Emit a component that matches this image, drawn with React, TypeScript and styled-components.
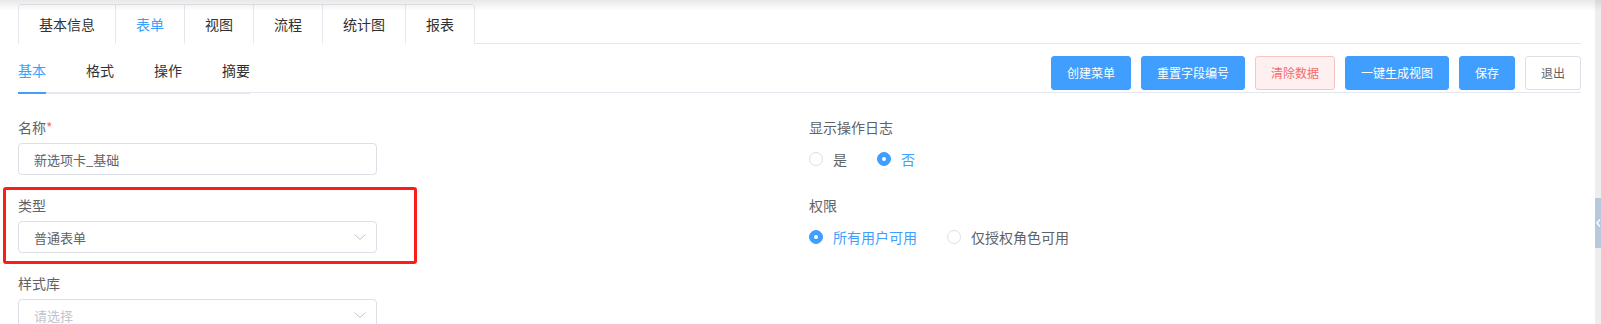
import React from "react";
import styled, { createGlobalStyle } from "styled-components";

const GlobalStyle = createGlobalStyle`
  html, body { margin: 0; padding: 0; background: #fff; }
  body { font-family: "Noto Sans CJK SC", "Noto Sans", sans-serif; color: #606266; }
  * { box-sizing: border-box; }
`;

const Page = styled.div`
  position: relative;
  display: flex;
  width: 1601px;
  height: 324px;
  overflow: hidden;
`;

const TopShade = styled.div`
  position: absolute;
  left: 0;
  right: 0;
  top: 0;
  height: 11px;
  background: linear-gradient(rgba(0, 0, 0, 0.09), rgba(0, 0, 0, 0));
  pointer-events: none;
  z-index: 3;
`;

const Main = styled.div`
  flex: 1;
  padding: 4px 14px 0 18px;
  min-width: 0;
`;

const SideStrip = styled.div`
  position: relative;
  width: 6px;
  background: #eeeeee;
`;

const SideHandle = styled.div`
  position: absolute;
  left: 0;
  top: 198px;
  width: 6px;
  height: 50px;
  background: #b7c8dc;
  display: flex;
  align-items: center;
  justify-content: center;
`;

const CardHeader = styled.div`
  display: flex;
  border-bottom: 1px solid #e4e7ed;
  height: 40px;
`;

const CardNav = styled.div`
  display: flex;
  border: 1px solid #e4e7ed;
  border-bottom: none;
  border-radius: 4px 4px 0 0;
  height: 40px;
`;

const CardTab = styled.div<{ $active?: boolean; $first?: boolean }>`
  height: 39px;
  line-height: 38px;
  padding: 0 20px;
  font-size: 14px;
  color: ${(p) => (p.$active ? "#409eff" : "#303133")};
  border-left: ${(p) => (p.$first ? "none" : "1px solid #e4e7ed")};
  border-bottom: 1px solid ${(p) => (p.$active ? "#fff" : "transparent")};
  background: #fff;
  white-space: nowrap;
`;

const HeaderRow = styled.div`
  display: flex;
  justify-content: space-between;
  height: 49px;
  border-bottom: 1px solid #e4e7ed;
`;

const SubNav = styled.div`
  display: flex;
  align-self: flex-end;
  border-bottom: 2px solid #e4e7ed;
  margin-bottom: -2px;
`;

const SubTab = styled.div<{ $active?: boolean; $first?: boolean; $last?: boolean }>`
  position: relative;
  height: 38px;
  line-height: 32px;
  font-size: 14px;
  padding: 0 ${(p) => (p.$last ? 0 : 20)}px 0 ${(p) => (p.$first ? 0 : 20)}px;
  color: ${(p) => (p.$active ? "#409eff" : "#303133")};
  &::after {
    content: "";
    display: ${(p) => (p.$active ? "block" : "none")};
    position: absolute;
    left: ${(p) => (p.$first ? 0 : 20)}px;
    right: ${(p) => (p.$last ? 0 : 20)}px;
    bottom: -2px;
    height: 2px;
    background: #409eff;
  }
`;

const Actions = styled.div`
  display: flex;
  gap: 10px;
  align-self: flex-end;
  margin-bottom: 2px;
`;

type Variant = "primary" | "danger" | "default";

const Button = styled.button<{ $variant: Variant }>`
  height: 34px;
  padding: 0 15px;
  font-family: inherit;
  font-size: 12px;
  line-height: 1;
  border-radius: 3px;
  border: 1px solid
    ${(p) =>
      p.$variant === "primary" ? "#409eff" : p.$variant === "danger" ? "#fbc4c4" : "#dcdfe6"};
  background: ${(p) =>
    p.$variant === "primary" ? "#409eff" : p.$variant === "danger" ? "#fef0f0" : "#fff"};
  color: ${(p) =>
    p.$variant === "primary" ? "#fff" : p.$variant === "danger" ? "#f56c6c" : "#606266"};
  white-space: nowrap;
  cursor: pointer;
`;

const FormGrid = styled.div`
  display: grid;
  grid-template-columns: 791px 1fr;
  padding-top: 24px;
`;

const Column = styled.div`
  display: flex;
  flex-direction: column;
`;

const FormItem = styled.div`
  display: flex;
  flex-direction: column;
  margin-bottom: 20px;
`;

const Label = styled.div`
  height: 20px;
  line-height: 20px;
  font-size: 14px;
  color: #606266;
  margin-bottom: 6px;
`;

const Required = styled.span`
  color: #f56c6c;
`;

const Field = styled.div<{ $placeholder?: boolean }>`
  width: 359px;
  height: 32px;
  border: 1px solid #dcdfe6;
  border-radius: 4px;
  padding: 0 10px 0 15px;
  display: flex;
  align-items: center;
  justify-content: space-between;
  font-size: 13px;
  color: ${(p) => (p.$placeholder ? "#c0c4cc" : "#606266")};
  background: #fff;
`;

const RadioGroup = styled.div`
  height: 32px;
  display: flex;
  align-items: center;
`;

const RadioItem = styled.label<{ $checked?: boolean }>`
  display: flex;
  align-items: center;
  margin-right: 30px;
  font-size: 14px;
  line-height: 20px;
  color: ${(p) => (p.$checked ? "#409eff" : "#606266")};
`;

const RadioDot = styled.span<{ $checked?: boolean }>`
  width: 14px;
  height: 14px;
  border-radius: 50%;
  border: 1px solid ${(p) => (p.$checked ? "#409eff" : "#dcdfe6")};
  background: ${(p) => (p.$checked ? "#409eff" : "#fff")};
  margin-right: 10px;
  display: flex;
  align-items: center;
  justify-content: center;
  &::after {
    content: "";
    width: 4px;
    height: 4px;
    border-radius: 50%;
    background: #fff;
    display: ${(p) => (p.$checked ? "block" : "none")};
  }
`;

const Highlight = styled.div`
  position: absolute;
  left: 3px;
  top: 187px;
  width: 414px;
  height: 77px;
  border: 3px solid #fa1e16;
  border-radius: 3px;
  pointer-events: none;
  z-index: 2;
`;

const Chevron = () => (
  <svg width="12" height="12" viewBox="0 0 12 12" fill="none">
    <polyline points="0.5,3.5 6,8.5 11.5,3.5" stroke="#c0c4cc" strokeWidth="1" />
  </svg>
);

const Radio = ({ label, checked }: { label: string; checked?: boolean }) => (
  <RadioItem $checked={checked}>
    <RadioDot $checked={checked} />
    {label}
  </RadioItem>
);

const cardTabs = ["基本信息", "表单", "视图", "流程", "统计图", "报表"];
const subTabs = ["基本", "格式", "操作", "摘要"];
const buttons: { text: string; variant: Variant }[] = [
  { text: "创建菜单", variant: "primary" },
  { text: "重置字段编号", variant: "primary" },
  { text: "清除数据", variant: "danger" },
  { text: "一键生成视图", variant: "primary" },
  { text: "保存", variant: "primary" },
  { text: "退出", variant: "default" },
];

export default function App() {
  return (
    <>
      <GlobalStyle />
      <Page>
        <TopShade />
        <Main>
          <CardHeader>
            <CardNav>
              {cardTabs.map((t, i) => (
                <CardTab key={t} $first={i === 0} $active={t === "表单"}>
                  {t}
                </CardTab>
              ))}
            </CardNav>
          </CardHeader>
          <HeaderRow>
            <SubNav>
              {subTabs.map((t, i) => (
                <SubTab
                  key={t}
                  $first={i === 0}
                  $last={i === subTabs.length - 1}
                  $active={i === 0}
                >
                  {t}
                </SubTab>
              ))}
            </SubNav>
            <Actions>
              {buttons.map((b) => (
                <Button key={b.text} $variant={b.variant}>
                  {b.text}
                </Button>
              ))}
            </Actions>
          </HeaderRow>
          <FormGrid>
            <Column>
              <FormItem>
                <Label>
                  名称<Required>*</Required>
                </Label>
                <Field>新选项卡_基础</Field>
              </FormItem>
              <FormItem>
                <Label>类型</Label>
                <Field>
                  普通表单
                  <Chevron />
                </Field>
              </FormItem>
              <FormItem>
                <Label>样式库</Label>
                <Field $placeholder>
                  请选择
                  <Chevron />
                </Field>
              </FormItem>
            </Column>
            <Column>
              <FormItem>
                <Label>显示操作日志</Label>
                <RadioGroup>
                  <Radio label="是" />
                  <Radio label="否" checked />
                </RadioGroup>
              </FormItem>
              <FormItem>
                <Label>权限</Label>
                <RadioGroup>
                  <Radio label="所有用户可用" checked />
                  <Radio label="仅授权角色可用" />
                </RadioGroup>
              </FormItem>
            </Column>
          </FormGrid>
        </Main>
        <SideStrip>
          <SideHandle>
            <svg width="5" height="8" viewBox="0 0 5 8" fill="none">
              <polyline points="4,0.5 1,4 4,7.5" stroke="#fff" strokeWidth="1.3" />
            </svg>
          </SideHandle>
        </SideStrip>
        <Highlight />
      </Page>
    </>
  );
}
